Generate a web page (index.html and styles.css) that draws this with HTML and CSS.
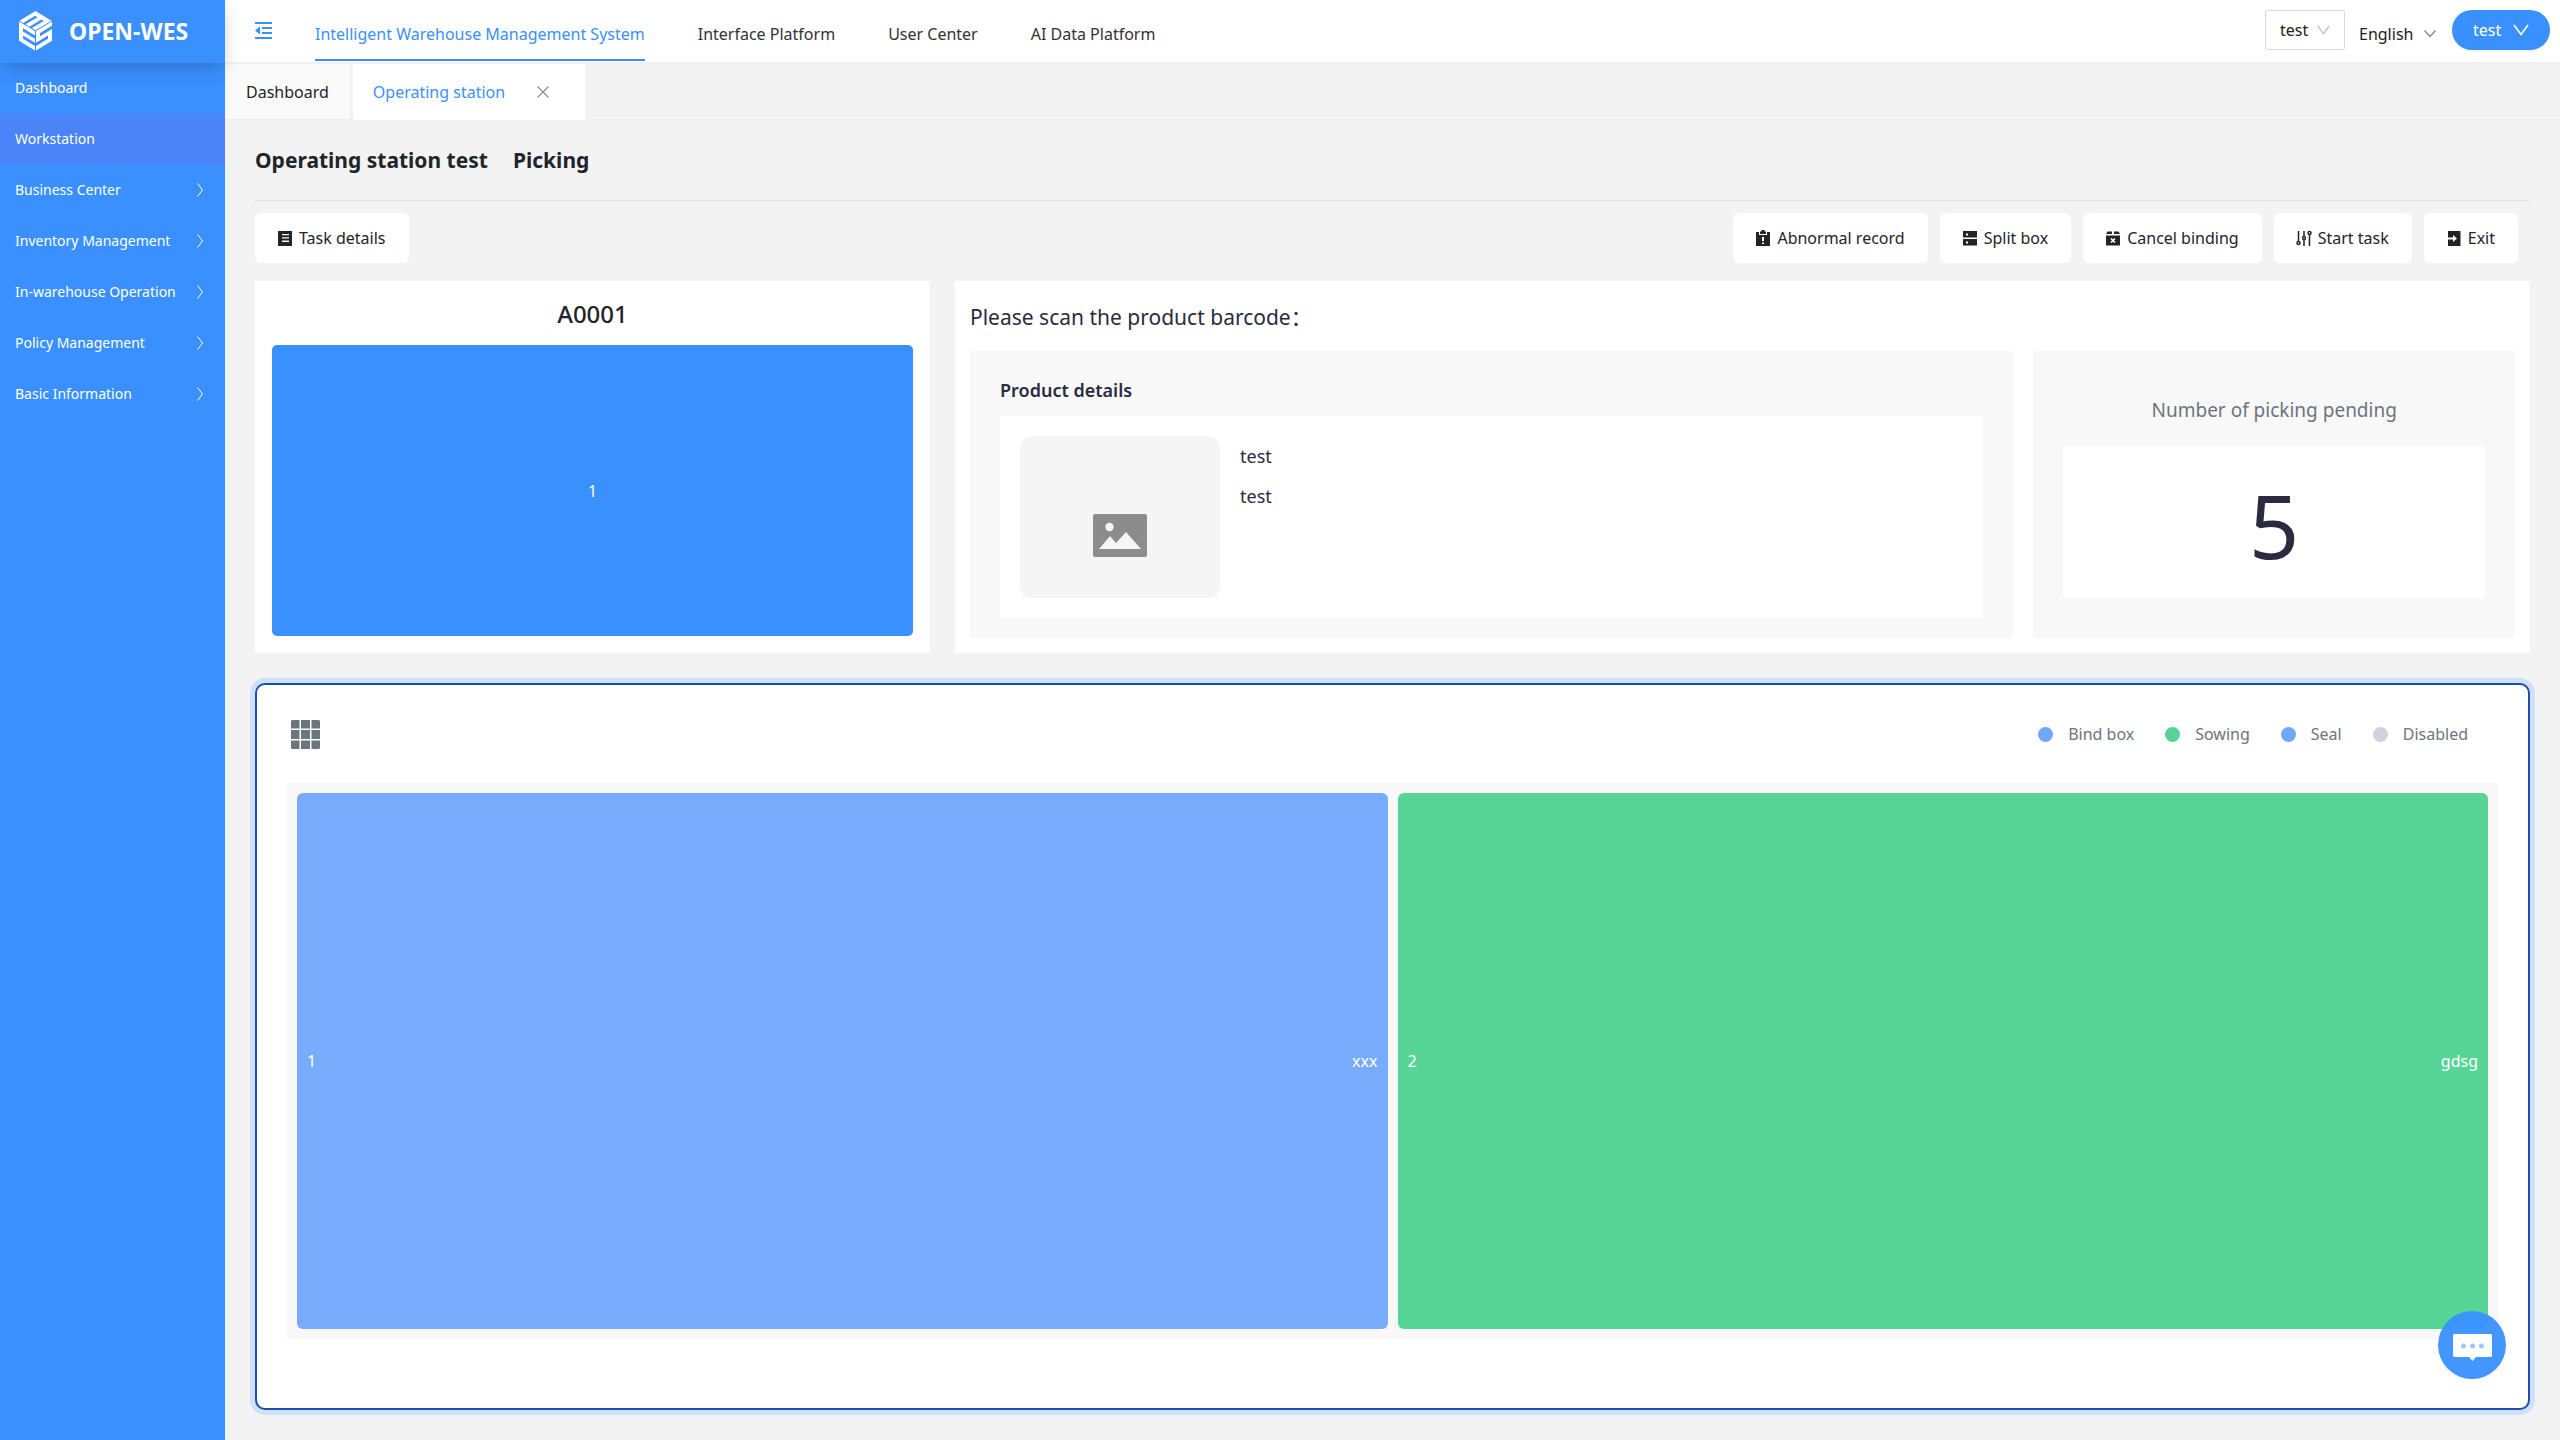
FILE: index.html
```
<!DOCTYPE html>
<html lang="en">
<head>
<meta charset="utf-8">
<title>OPEN-WES - Operating station</title>
<link rel="stylesheet" href="styles.css">
</head>
<body>
<svg width="0" height="0" class="sprite" aria-hidden="true">
  <symbol id="right" viewBox="0 0 8 16"><path d="M1.500 1.500 6.500 8 1.500 14.500" fill="none" stroke="currentColor" stroke-width="1"/></symbol>
  <symbol id="down" viewBox="0 0 16 12"><path d="M1 1 8 10.500 15 1" fill="none" stroke="currentColor" stroke-width="1.600"/></symbol>
  <symbol id="down-flat" viewBox="0 0 12 8"><path d="M.5.5 6 6.500 11.500.5" fill="none" stroke="currentColor" stroke-width="1.400"/></symbol>
</svg>
<div class="app">
  <aside class="sidebar">
    <div class="brand">
      <svg class="brand-logo" viewBox="0 0 33 40" fill="#fff" aria-hidden="true">
        <path transform="matrix(1 .6 0 1 0 10.500)" d="M0 0H16V4.300H4V7.600H16V11.600H4V14.900H16V19.300H0Z"/>
        <path transform="matrix(1 -.6 0 1 17 20.100)" d="M0 0H16V4.300H4V7.600H16V19.300H0V14.900H12V11.600H0Z"/>
        <path transform="matrix(1 -.6 1 .6 .5 9.700)" d="M0 0H16V16H0V12.300H12V9.900H0V6.100H12V3.700H0Z"/>
      </svg>
      <span>OPEN-WES</span>
    </div>
    <nav class="menu">
      <a href="#">Dashboard</a>
      <a href="#" class="active">Workstation</a>
      <a href="#">Business Center<svg><use href="#right"/></svg></a>
      <a href="#">Inventory Management<svg><use href="#right"/></svg></a>
      <a href="#">In-warehouse Operation<svg><use href="#right"/></svg></a>
      <a href="#">Policy Management<svg><use href="#right"/></svg></a>
      <a href="#">Basic Information<svg><use href="#right"/></svg></a>
    </nav>
  </aside>

  <div class="content">
    <header class="topbar">
      <button class="fold" aria-label="Collapse menu">
        <svg viewBox="0 0 17 17" fill="currentColor"><path d="M0 0H17V2H0ZM7 5H17V7H7ZM7 10H17V12H7ZM0 15H17V17H0ZM5 4.500V12.500L0 8.500Z"/></svg>
      </button>
      <nav class="systems">
        <a href="#" class="active">Intelligent Warehouse Management System</a>
        <a href="#">Interface Platform</a>
        <a href="#">User Center</a>
        <a href="#">AI Data Platform</a>
      </nav>
      <div class="tools">
        <div class="picker boxed"><select aria-label="Warehouse"><option>test</option></select><svg><use href="#down"/></svg></div>
        <div class="picker lang"><select aria-label="Language"><option>English</option></select><svg><use href="#down-flat"/></svg></div>
        <button class="user">test<svg><use href="#down"/></svg></button>
      </div>
    </header>

    <div class="tabs">
      <a href="#" class="tab">Dashboard</a>
      <div class="tab current">
        <a href="#">Operating station</a>
        <button aria-label="Close tab"><svg viewBox="0 0 12 12"><path d="M.5.5 11.500 11.500M11.500.5.5 11.500" stroke="currentColor" stroke-width="1.200"/></svg></button>
      </div>
    </div>

    <main class="page">
      <h1 class="title"><span>Operating station test</span><span>Picking</span></h1>

      <div class="actions">
        <button class="action"><svg viewBox="0 0 16 16"><path fill="currentColor" fill-rule="evenodd" d="M1 1H15V16H1ZM5 4V5.300H12V4ZM5 7.300V8.600H12V7.300ZM5 10.600V12H12V10.600Z"/></svg>Task details</button>
        <div class="action-group">
          <button class="action"><svg viewBox="0 0 16 16"><path fill="currentColor" fill-rule="evenodd" d="M1 2H4V5H12V2H15V16H1ZM7 7V11H9V7ZM7 12.500V14H9V12.500ZM5 1.500H6.500V0H9.500V1.500H11V4H5Z"/></svg>Abnormal record</button>
          <button class="action"><svg viewBox="0 0 16 16"><path fill="currentColor" fill-rule="evenodd" d="M1 1H15V7.500H1ZM1 9H15V15.500H1ZM4 3.500V5.500H6V3.500ZM4 11.500V13.500H6V11.500Z"/></svg>Split box</button>
          <button class="action"><svg viewBox="0 0 16 16"><path fill="currentColor" d="M1 4 2.500 1.500H7V4ZM9 1.500H13.500L15 4H9ZM1 5.500H15V15.500H1Z"/><path d="M6 8.500 10 12.500M10 8.500 6 12.500" stroke="#fff" stroke-width="1.600"/></svg>Cancel binding</button>
          <button class="action"><svg viewBox="0 0 16 16" fill="none" stroke="currentColor" stroke-width="1.500"><path d="M2.500 1V11M8 1V6M8 10V16M13.500 5V16"/><circle cx="2.500" cy="13" r="1.500"/><circle cx="8" cy="8" r="1.500"/><circle cx="13.500" cy="3" r="1.500"/></svg>Start task</button>
          <button class="action"><svg viewBox="0 0 16 16"><path fill="currentColor" fill-rule="evenodd" d="M2 1H14.500V16H2V9.500H7V12L11 8.500 7 5V7.500H2Z"/></svg>Exit</button>
        </div>
      </div>

      <div class="work">
        <section class="card shelf">
          <h2>A0001</h2>
          <button class="slot">1</button>
        </section>

        <section class="card scan">
          <h2>Please scan the product barcode：</h2>
          <div class="scan-body">
            <div class="panel product">
              <h3>Product details</h3>
              <div class="product-info">
                <div class="photo">
                  <svg viewBox="0 0 54 43"><rect width="54" height="43" rx="2" fill="#8c8c8c"/><circle cx="16.500" cy="13" r="4.200" fill="#f5f5f5"/><path d="M6 35 17 22 23 29 33 18 48 35Z" fill="#f5f5f5"/></svg>
                </div>
                <div class="product-text"><div>test</div><div>test</div></div>
              </div>
            </div>
            <div class="panel pending">
              <h3>Number of picking pending</h3>
              <div class="count">5</div>
            </div>
          </div>
        </section>
      </div>

      <section class="wall">
        <div class="wall-head">
          <svg class="grid-icon" viewBox="0 0 29 29" fill="#6c757d"><path d="M1 0H8.500V8.500H0V1ZM10 0H19V8.500H10ZM20.500 0H28L29 1V8.500H20.500ZM0 10H8.500V19H0ZM10 10H19V19H10ZM20.500 10H29V19H20.500ZM0 20.500H8.500V29H1L0 28ZM10 20.500H19V29H10ZM20.500 20.500H29V28L28 29H20.500Z"/></svg>
          <ul class="legend">
            <li class="bind">Bind box</li>
            <li class="sow">Sowing</li>
            <li class="seal">Seal</li>
            <li class="off">Disabled</li>
          </ul>
        </div>
        <div class="wall-body">
          <button class="bin waiting"><span>1</span><span>xxx</span></button>
          <button class="bin sowing"><span>2</span><span>gdsg</span></button>
        </div>
      </section>
    </main>
  </div>
</div>

<button class="chat" aria-label="Messages">
  <svg viewBox="0 0 39 27"><path d="M1 0H38L39 1V22L38 23H23L19.500 27 16 23H1L0 22V1Z" fill="#fff"/><g fill="#9cc7ff"><circle cx="10.500" cy="12" r="2.500"/><circle cx="19.500" cy="12" r="2.500"/><circle cx="28.500" cy="12" r="2.500"/></g></svg>
</button>
</body>
</html>
```
FILE: styles.css
```
* { box-sizing: border-box; }

body {
  margin: 0;
  background: #f3f3f3;
  color: #212529;
  font: 16px/24px "Noto Sans", "Noto Sans CJK SC", sans-serif;
}

h1, h2, h3, ul { margin: 0; padding: 0; }
a { color: inherit; text-decoration: none; }
button, select {
  margin: 0;
  padding: 0;
  border: 0;
  background: none;
  color: inherit;
  font: inherit;
  appearance: none;
}
svg { display: block; flex: none; }
.sprite { position: absolute; }

.app { display: flex; min-height: 100vh; }

/* Sidebar */
.sidebar { width: 225px; flex: none; background: #3a90ff; color: #fff; }
.brand {
  position: relative;
  z-index: 1;
  display: flex;
  align-items: center;
  gap: 17px;
  height: 63px;
  padding: 0 0 2px 19px;
  background: #3a90ff;
  box-shadow: 0 8px 20px -2px rgba(0, 0, 0, .18);
  font-size: 23px;
  font-weight: 700;
}
.brand-logo { width: 33px; height: 40px; }
.menu a {
  display: flex;
  align-items: center;
  justify-content: space-between;
  height: 51px;
  padding: 0 21px 1px 15px;
  font-size: 14px;
}
.menu .active { background: #4a84f8; }
.menu svg { width: 8px; height: 16px; }

/* Top bar */
.content { flex: 1; min-width: 0; display: flex; flex-direction: column; }
.topbar {
  display: flex;
  height: 63px;
  padding: 0 10px 0 30px;
  background: #fff;
  border-bottom: 1px solid #f0f0f0;
  color: #333;
}
.fold { align-self: flex-start; margin: 22px 43px 0 0; color: #3a90ff; }
.fold svg { width: 17px; height: 17px; }
.systems { display: flex; gap: 53px; }
.systems a { height: 61px; padding-top: 9px; line-height: 50px; }
.systems .active { color: #3a90ff; border-bottom: 2px solid #3a90ff; }
.tools { display: flex; gap: 15px; margin: 10px 0 0 auto; height: 40px; color: #222; }
.picker { display: grid; align-items: center; }
.picker select { grid-area: 1 / 1; }
.picker svg { grid-area: 1 / 1; justify-self: end; pointer-events: none; width: 13px; height: 10px; }
.boxed { width: 80px; border: 1px solid #d9d9d9; border-radius: 2px; }
.boxed select { padding-left: 14px; height: 38px; }
.boxed svg { margin-right: 14px; color: #bfbfbf; }
.lang { width: 77px; margin-right: 1px; margin-left: -1px; padding-top: 8px; }
.lang svg { width: 12px; height: 8px; color: #84878c; }
.user {
  display: flex;
  align-items: center;
  justify-content: space-between;
  width: 98px;
  padding: 0 21px;
  border-radius: 20px;
  background: #3a90ff;
  box-shadow: 0 2px 0 rgba(0, 0, 0, .04);
  color: #fff;
}
.user svg { width: 16px; height: 12px; }

/* Page tabs */
.tabs { display: flex; gap: 2px; height: 57px; padding-top: 1px; border-bottom: 1px solid #eee; }
.tab { display: flex; align-items: center; padding: 0 21px; background: #fafafa; border-right: 1px solid #f0f0f0; }
.current { gap: 32px; margin-bottom: -1px; padding: 0 36px 0 20px; background: #fff; color: #3a90ff; }
.tab button { color: #8c8c8c; }
.tab button svg { width: 12px; height: 12px; }

/* Page */
.page { flex: 1; display: flex; flex-direction: column; padding: 0 30px; }
.title {
  display: flex;
  gap: 25px;
  border-bottom: 1px solid #e2e2e2;
  font-size: 21px;
  line-height: 80px;
}
.actions { display: flex; justify-content: space-between; padding: 12px 12px 18px 0; }
.action-group { display: flex; gap: 12px; }
.action {
  display: flex;
  align-items: center;
  gap: 6px;
  height: 50px;
  padding: 0 23px 0 22px;
  border-radius: 6px;
  background: #fff;
}
.action svg { width: 16px; height: 16px; }

.work { display: grid; grid-template-columns: minmax(0, 3fr) minmax(0, 7fr); gap: 25px; }
.card { background: #fff; }
.shelf { display: flex; flex-direction: column; padding: 2px 17px 17px; }
.shelf h2 { font-size: 24px; font-weight: 500; line-height: 62px; text-align: center; }
.slot { flex: 1; border-radius: 5px; background: #3a90ff; color: #fff; }
.scan { padding: 2px 15px 15px; color: #2b2b40; }
.scan h2 { font-size: 21px; font-weight: 400; line-height: 68px; }
.scan-body { display: grid; grid-template-columns: minmax(0, 13fr) minmax(0, 6fr); gap: 20px; }
.panel { background: #f8f8f8; }
.product { padding: 26px 30px 20px; }
.product h3 { margin-bottom: 13px; font-size: 18px; font-weight: 600; line-height: 26px; }
.product-info { display: flex; gap: 20px; padding: 20px; background: #fff; }
.photo {
  display: flex;
  align-items: center;
  justify-content: center;
  width: 200px;
  height: 162px;
  padding-top: 36px;
  border-radius: 12px;
  background: #f5f5f5;
}
.photo svg { width: 54px; height: 43px; }
.product-text { font-size: 18px; line-height: 40px; }
.pending { padding: 46px 30px 40px; text-align: center; }
.pending h3 { margin-bottom: 23px; color: #6c757d; font-size: 19px; font-weight: 400; line-height: 26px; }
.count { padding-top: 6px; background: #fff; font-size: 88px; line-height: 146px; }

/* Put wall */
.wall {
  flex: 1;
  display: flex;
  flex-direction: column;
  margin: 30px 0;
  padding: 0 30px 69px;
  border: 2px solid #1c4eaf;
  border-radius: 10px;
  background: #fff;
  box-shadow: 0 0 0 5px #d0e0fb;
}
.wall-head { display: flex; align-items: center; justify-content: space-between; height: 98px; padding: 0 30px 0 4px; }
.grid-icon { width: 29px; height: 29px; }
.legend { display: flex; gap: 31px; list-style: none; color: #6c757d; }
.legend li { display: flex; align-items: center; gap: 15px; }
.legend li::before { content: ""; width: 15px; height: 15px; border-radius: 50%; background: #70a6fb; }
.legend .sow::before { background: #58d296; }
.legend .off::before { background: #d0d3db; }
.wall-body { flex: 1; display: grid; grid-template-columns: 1fr 1fr; gap: 10px; padding: 10px; background: #f8f8f8; }
.bin {
  display: flex;
  align-items: center;
  justify-content: space-between;
  min-height: 200px;
  padding: 0 10px;
  border-radius: 6px;
  color: #fff;
}
.waiting { background: #78abfb; }
.sowing { background: #56d596; }

.chat {
  position: fixed;
  right: 54px;
  bottom: 61px;
  display: flex;
  align-items: center;
  justify-content: center;
  width: 68px;
  height: 68px;
  border-radius: 50%;
  background: rgba(58, 144, 255, .95);
}
.chat svg { width: 39px; height: 27px; margin-top: 4px; }
```
